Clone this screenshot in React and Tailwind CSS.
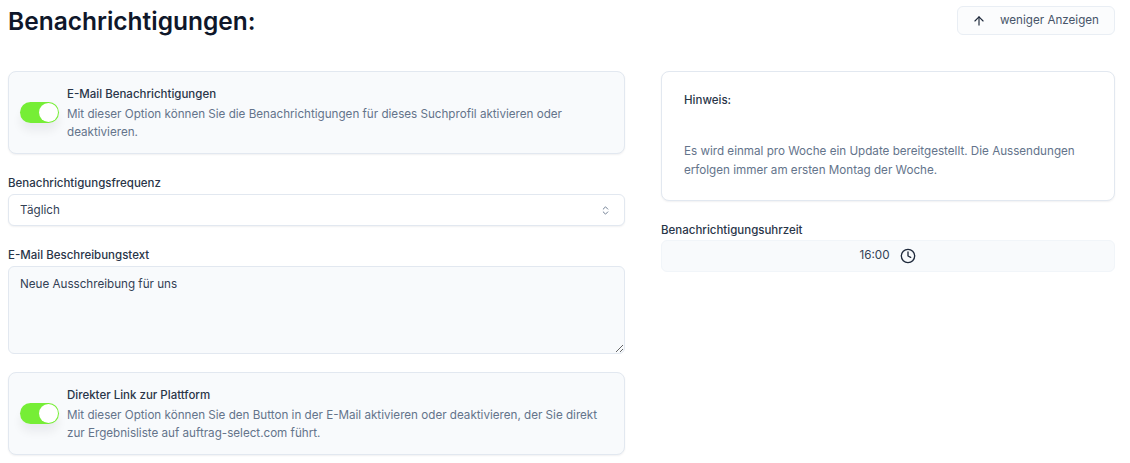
import React from "react";
import { ArrowUp, ChevronsUpDown, Clock } from "lucide-react";

function ToggleCard({ title, text }) {
  return (
    <div className="flex items-center gap-2 h-[83px] rounded-lg border border-[#e2e8f0] bg-[#f8fafc] pl-[11px] pr-4 shadow-[0_1px_2px_rgba(15,23,42,0.06)]">
      <div className="relative w-[39px] h-[21px] shrink-0 rounded-full bg-[#76ee36] shadow-[0_8px_10px_rgba(15,23,42,0.06)]">
        <div className="absolute right-[1px] top-[1px] w-[19px] h-[19px] rounded-full bg-white" />
      </div>
      <div className="min-w-0">
        <div className="text-[11.5px] leading-[20px] font-medium text-[#293548]">{title}</div>
        <div className="text-[11.65px] leading-[18px] mt-[1px] text-[#64748b]">{text}</div>
      </div>
    </div>
  );
}

export default function App() {
  return (
    <div className="w-[1130px] h-[463px] overflow-hidden bg-white pl-2 pr-[15px] font-['Inter',sans-serif]">
      <div className="flex justify-between pt-1.5 h-[71px]">
        <h1 className="text-[24.5px] leading-[32px] -mt-[1px] font-semibold text-[#0f172a]">Benachrichtigungen:</h1>
        <button className="flex items-center gap-[14px] h-[29px] w-[158px] pl-[14px] rounded-md border border-[#e9eef4] bg-[#fbfcfd] text-[11.65px] text-[#475569]">
          <ArrowUp size={14} className="text-[#1e293b]" />
          weniger Anzeigen
        </button>
      </div>
      <div className="grid grid-cols-[617px_454px] gap-[36px]">
        <div className="flex flex-col">
          <ToggleCard
            title="E-Mail Benachrichtigungen"
            text="Mit dieser Option können Sie die Benachrichtigungen für dieses Suchprofil aktivieren oder deaktivieren."
          />
          <label className="mt-[19px] text-[11.5px] leading-[20px] font-medium text-[#293548]">Benachrichtigungsfrequenz</label>
          <div className="mt-[1px] flex items-center justify-between h-[32px] pt-[1px] rounded-md border border-[#e2e8f0] bg-white pl-[11px] pr-[13px] text-[11.65px] text-[#334155] shadow-[0_1px_2px_rgba(15,23,42,0.06)]">
            Täglich
            <ChevronsUpDown size={11} className="text-[#64748b]" />
          </div>
          <label className="mt-[19px] text-[11.5px] leading-[20px] font-medium text-[#293548]">E-Mail Beschreibungstext</label>
          <textarea
            readOnly
            defaultValue="Neue Ausschreibung für uns"
            className="mt-[1px] h-[88px] resize-y rounded-md border border-[#e2e8f0] bg-[#f8fafc] px-[11px] py-[8px] text-[11.65px] leading-[18px] text-[#334155] outline-none font-['Inter',sans-serif]"
          />
          <div className="mt-[18px]">
            <ToggleCard
              title="Direkter Link zur Plattform"
              text="Mit dieser Option können Sie den Button in der E-Mail aktivieren oder deaktivieren, der Sie direkt zur Ergebnisliste auf auftrag-select.com führt."
            />
          </div>
        </div>
        <div className="flex flex-col">
          <div className="h-[130px] rounded-lg border border-[#e2e8f0] bg-white px-[22px] pt-[18px] shadow-[0_1px_2px_rgba(15,23,42,0.06)]">
            <div className="text-[11.5px] leading-[20px] font-medium text-[#293548]">Hinweis:</div>
            <div className="mt-[32px] text-[11.65px] leading-[18.5px] text-[#64748b]">
              Es wird einmal pro Woche ein Update bereitgestellt. Die Aussendungen erfolgen immer am ersten Montag der Woche.
            </div>
          </div>
          <label className="mt-[19px] text-[11.5px] leading-[20px] font-medium text-[#293548]">Benachrichtigungsuhrzeit</label>
          <div className="flex items-center justify-center gap-[10px] h-[32px] pr-[1px] rounded-md border border-[#f1f5f9] bg-[#f8fafc] text-[11.65px] text-[#334155]">
            16:00
            <Clock size={16} className="text-[#1e293b]" />
          </div>
        </div>
      </div>
    </div>
  );
}
